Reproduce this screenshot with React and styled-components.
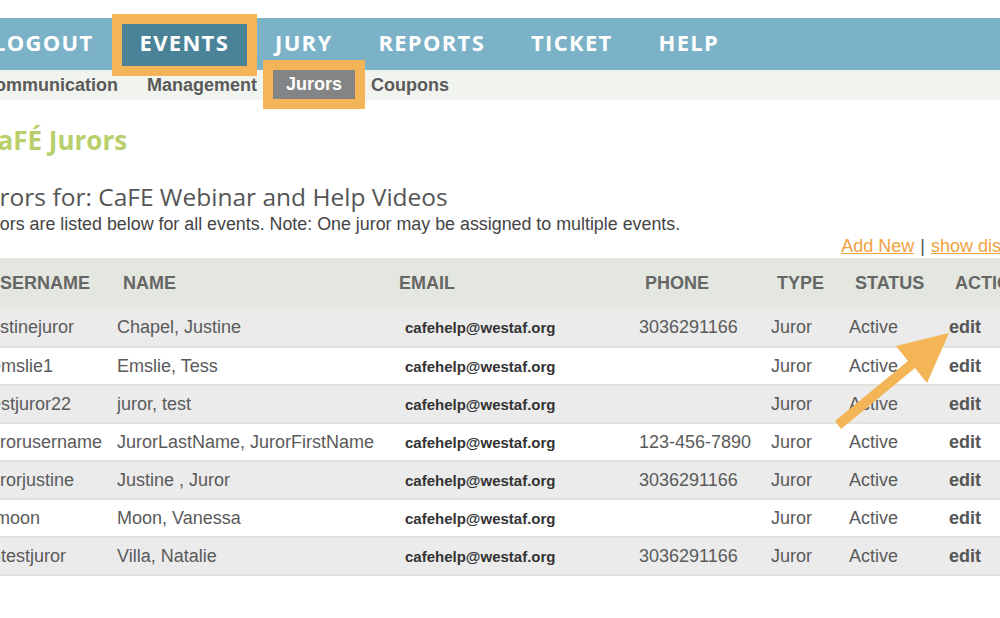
import React from 'react'
import styled, { createGlobalStyle } from 'styled-components'

const GlobalStyle = createGlobalStyle`
  html, body {
    margin: 0;
    padding: 0;
    background: #fff;
    overflow: hidden;
  }
  body {
    font-family: "Liberation Sans", Arial, sans-serif;
  }
`

const Page = styled.div`
  position: relative;
  width: 1000px;
  height: 618px;
  overflow: hidden;
  padding-top: 18px;
  box-sizing: border-box;
`

const NavBar = styled.nav`
  height: 52px;
  background: #7bb2c7;
  display: flex;
  align-items: flex-start;
  gap: 10px;
  margin-left: -25px;
`

const NavItem = styled.a`
  display: flex;
  align-items: center;
  height: 42px;
  margin-top: 6px;
  padding: 0 18px 7px;
  box-sizing: border-box;
  font-family: "Open Sans", sans-serif;
  font-weight: 700;
  font-size: 22px;
  letter-spacing: 1.3px;
  color: #fff;
  background: ${p => (p.$active ? '#4a8397' : 'transparent')};
  outline: ${p => (p.$active ? '10px solid #f3b557' : 'none')};
`

const SubNav = styled.div`
  height: 30px;
  background: #f1f4ee;
  display: flex;
  gap: 3px;
  margin-left: -31px;
`

const SubItem = styled.a`
  display: flex;
  align-items: center;
  padding: 0 13px;
  height: ${p => (p.$active ? '29px' : '30px')};
  font-size: 18px;
  font-weight: 700;
  color: ${p => (p.$active ? '#fff' : '#5a5a5a')};
  background: ${p => (p.$active ? '#838486' : 'transparent')};
  outline: ${p => (p.$active ? '10px solid #f3b557' : 'none')};
`

const Title = styled.h1`
  margin: 23px 0 0 -19px;
  font-family: "Open Sans", sans-serif;
  font-weight: 700;
  font-size: 26px;
  line-height: 34px;
  color: #b9cf6b;
`

const SubTitle = styled.h2`
  margin: 24px 0 0 -22px;
  font-family: "Open Sans", sans-serif;
  font-weight: 400;
  font-size: 24.5px;
  line-height: 32px;
  color: #555;
`

const Desc = styled.p`
  margin: 1px 0 0 -25px;
  font-size: 17.85px;
  line-height: 20px;
  color: #444;
`

const TableWrap = styled.div`
  margin-left: -24px;
  width: 1083px;
`

const Links = styled.div`
  display: flex;
  justify-content: flex-end;
  gap: 6px;
  padding-right: 14px;
  margin-top: 2px;
  font-size: 18px;
  line-height: 20px;
  color: #555;
`

const LinkText = styled.a`
  color: #f0a23f;
  text-decoration: underline;
`

const Table = styled.table`
  margin-top: 2px;
  width: 1083px;
  table-layout: fixed;
  border-collapse: collapse;
`

const HeadRow = styled.tr`
  height: 51px;
  background: #e4e6e0;
`

const Th = styled.th`
  text-align: left;
  padding: 0 0 0 ${p => p.$pad ?? 16}px;
  font-size: 18px;
  font-weight: 700;
  color: #666;
  white-space: nowrap;
`

const Row = styled.tr`
  height: 38px;
  background: ${p => (p.$odd ? '#ebebeb' : '#fff')};
  border-bottom: 2px solid #e1e1dd;
`

const Td = styled.td`
  padding: 0 0 0 10px;
  font-size: 18px;
  color: #5a5a5a;
  white-space: nowrap;
  overflow: hidden;
`

const EmailTd = styled(Td)`
  padding-left: 12px;
  font-size: 15px;
  font-weight: 700;
  color: #333;
`

const EditTd = styled(Td)`
  font-weight: 700;
  color: #555;
`

const Arrow = styled.svg`
  position: absolute;
  left: 0;
  top: 0;
  pointer-events: none;
`

const jurors = [
  ['justinejuror', 'Chapel, Justine', '3036291166'],
  ['temslie1', 'Emslie, Tess', ''],
  ['testjuror22', 'juror, test', ''],
  ['jurorusername', 'JurorLastName, JurorFirstName', '123-456-7890'],
  ['jurorjustine', 'Justine , Juror', '3036291166'],
  ['vmoon', 'Moon, Vanessa', ''],
  ['mtestjuror', 'Villa, Natalie', '3036291166'],
]

const widths = [131, 286, 236, 132, 78, 100, 120]

const App = () => {
  return (
    <Page>
      <GlobalStyle />
      <NavBar>
        <NavItem>LOGOUT</NavItem>
        <NavItem $active>EVENTS</NavItem>
        <NavItem>JURY</NavItem>
        <NavItem>REPORTS</NavItem>
        <NavItem>TICKET</NavItem>
        <NavItem>HELP</NavItem>
      </NavBar>
      <SubNav>
        <SubItem>Communication</SubItem>
        <SubItem>Management</SubItem>
        <SubItem $active>Jurors</SubItem>
        <SubItem>Coupons</SubItem>
      </SubNav>

      <Title>CaFÉ Jurors</Title>
      <SubTitle>Jurors for: CaFE Webinar and Help Videos</SubTitle>
      <Desc>Jurors are listed below for all events. Note: One juror may be assigned to multiple events.</Desc>

      <TableWrap>
        <Links>
          <LinkText>Add New</LinkText>
          <span>|</span>
          <LinkText>show disabled</LinkText>
        </Links>
        <Table>
          <colgroup>
            {widths.map((w, i) => (
              <col key={i} style={{ width: w }} />
            ))}
          </colgroup>
          <thead>
            <HeadRow>
              <Th $pad={11}>USERNAME</Th>
              <Th>NAME</Th>
              <Th $pad={6}>EMAIL</Th>
              <Th>PHONE</Th>
              <Th>TYPE</Th>
              <Th>STATUS</Th>
              <Th>ACTIONS</Th>
            </HeadRow>
          </thead>
          <tbody>
            {jurors.map(([user, name, phone], i) => (
              <Row key={user} $odd={i % 2 === 0}>
                <Td>{user}</Td>
                <Td>{name}</Td>
                <EmailTd>cafehelp@westaf.org</EmailTd>
                <Td>{phone}</Td>
                <Td>Juror</Td>
                <Td>Active</Td>
                <EditTd>edit</EditTd>
              </Row>
            ))}
          </tbody>
        </Table>
      </TableWrap>

      <Arrow width="1000" height="618" viewBox="0 0 1000 618">
        <polygon
          points="835,421 908,361 896,346 949,333 927,383 915,368 841,429"
          fill="#f4b556"
        />
      </Arrow>
    </Page>
  )
}

export default App
